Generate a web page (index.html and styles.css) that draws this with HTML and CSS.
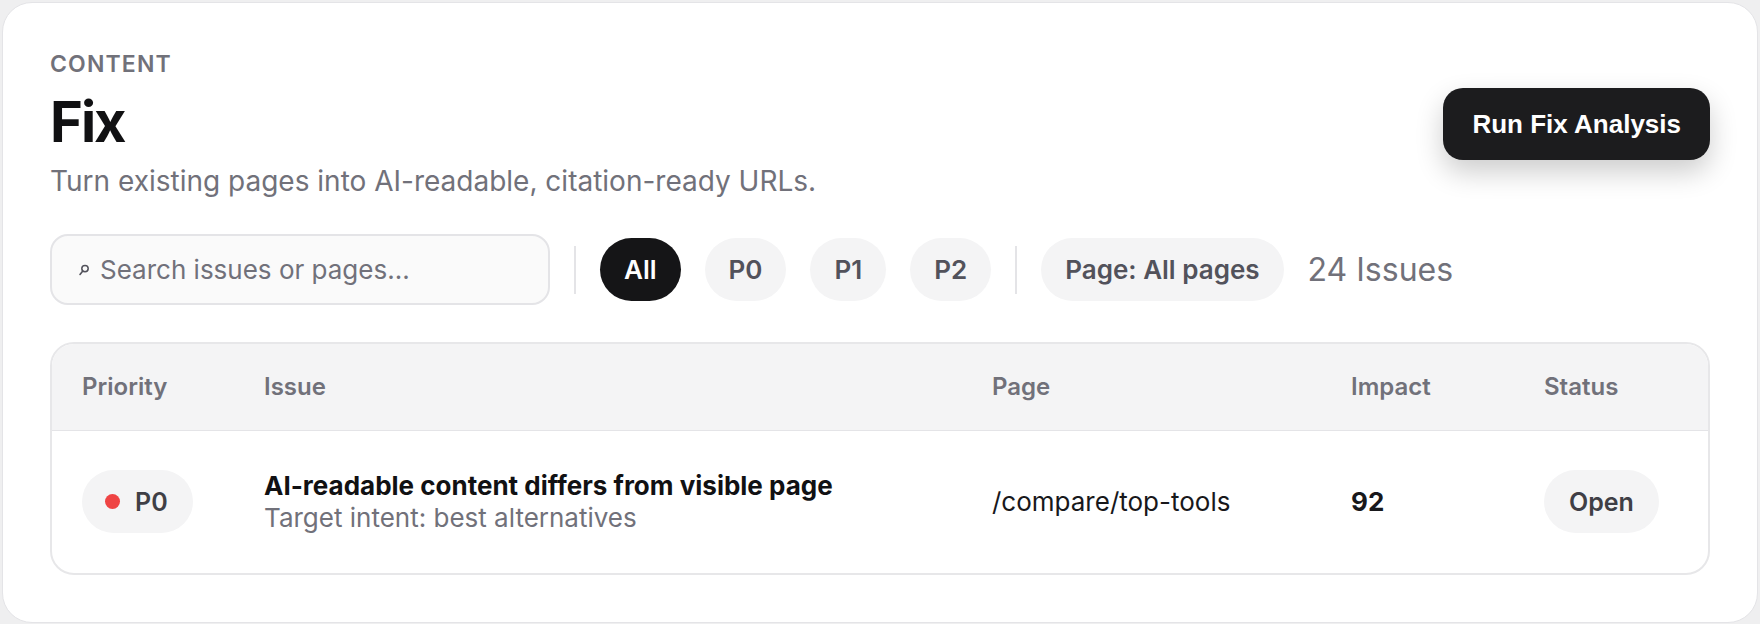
FILE: index.html
```html
<!DOCTYPE html>
<html lang="en">
  <head>
    <meta charset="UTF-8" />
    <meta name="viewport" content="width=device-width, initial-scale=1.0" />
    <title>Fix</title>
    <link rel="stylesheet" href="styles.css">
  </head>
  <body>
    <div class="panel">
      <div class="panel-head">
        <div class="titles">
          <p class="eyebrow">Content</p>
          <h1>Fix</h1>
          <p class="lead">Turn existing pages into AI-readable, citation-ready URLs.</p>
        </div>
        <button class="run-btn">Run Fix Analysis</button>
      </div>

      <div class="toolbar">
        <label class="search">
          <svg class="search-icon" width="12" height="12" viewBox="0 0 12 12">
            <circle cx="7" cy="4.6" r="3.2" fill="none" stroke="#52525b" stroke-width="1.5" />
            <line x1="4.8" y1="7" x2="2" y2="10.4" stroke="#52525b" stroke-width="1.6" stroke-linecap="round" />
          </svg>
          <input type="search" placeholder="Search issues or pages..." />
        </label>
        <span class="divider"></span>
        <button class="chip active">All</button>
        <button class="chip">P0</button>
        <button class="chip">P1</button>
        <button class="chip">P2</button>
        <span class="divider"></span>
        <button class="chip">Page: All pages</button>
        <span class="count">24 Issues</span>
      </div>

      <div class="issues">
        <table>
          <colgroup>
            <col class="col-priority" />
            <col class="col-issue" />
            <col class="col-page" />
            <col class="col-impact" />
            <col />
          </colgroup>
          <tr>
            <th>Priority</th>
            <th>Issue</th>
            <th>Page</th>
            <th>Impact</th>
            <th>Status</th>
          </tr>
          <tr>
            <td><span class="badge"><span class="dot"></span>P0</span></td>
            <td>
              <p class="issue-title">AI-readable content differs from visible page</p>
              <p class="issue-sub">Target intent: best alternatives</p>
            </td>
            <td class="page-url">/compare/top-tools</td>
            <td class="impact">92</td>
            <td><span class="badge status">Open</span></td>
          </tr>
        </table>
      </div>
    </div>
  </body>
</html>
```

FILE: styles.css
```css
* {
  font-family: "Inter", "Noto Sans", sans-serif;
  margin: 0;
  padding: 0;
  box-sizing: border-box;
}

body {
  background-color: #efeff0;
  padding: 2px;
}

.panel {
  background: #fff;
  border: 1px solid #e4e4e7;
  border-radius: 30px;
  padding: 47px 47px 47px;
}

/* Header */
.panel-head {
  display: flex;
  justify-content: space-between;
  align-items: center;
}

.eyebrow {
  color: #71717a;
  font-size: 23px;
  line-height: 28px;
  font-weight: 600;
  letter-spacing: 0.05em;
  text-transform: uppercase;
}

h1 {
  color: #111113;
  font-size: 56px;
  line-height: 68px;
  font-weight: 700;
  letter-spacing: -0.035em;
  margin-top: 10px;
}

.lead {
  color: #71717a;
  font-size: 28px;
  line-height: 34px;
  margin-top: 8px;
}

.run-btn {
  font-family: "Liberation Sans", Arial, sans-serif;
  font-size: 26px;
  font-weight: 700;
  color: #fff;
  background: #1c1c1e;
  border: none;
  border-radius: 20px;
  height: 72px;
  padding: 0 29px;
  box-shadow: 0 12px 28px rgba(0, 0, 0, 0.2);
  cursor: pointer;
}

/* Filters */
.toolbar {
  display: flex;
  align-items: center;
  gap: 24px;
  margin-top: 36px;
}

.search {
  display: flex;
  align-items: center;
  gap: 10px;
  width: 500px;
  height: 71px;
  padding: 0 26px;
  border: 2px solid #e4e4e7;
  border-radius: 18px;
  background: #fafafa;
}

.search-icon {
  flex-shrink: 0;
}

.search input {
  border: none;
  outline: none;
  background: transparent;
  font-size: 26px;
  color: #27272a;
  width: 100%;
}

.search input::placeholder {
  color: #71717a;
}

.divider {
  width: 2px;
  height: 48px;
  background: #e4e4e7;
}

.chip {
  height: 63px;
  padding: 0 24px;
  border: none;
  border-radius: 999px;
  background: #f4f4f5;
  color: #52525b;
  font-size: 26px;
  font-weight: 600;
  cursor: pointer;
}

.chip.active {
  background: #151517;
  color: #fff;
}

.count {
  color: #71717a;
  font-size: 32px;
}

/* Issues table */
.issues {
  margin-top: 37px;
  border: 2px solid #e7e7e9;
  border-radius: 24px;
  overflow: hidden;
}

table {
  width: 100%;
  table-layout: fixed;
  border-collapse: collapse;
}

.col-priority {
  width: 182px;
}

.col-issue {
  width: 728px;
}

.col-page {
  width: 359px;
}

.col-impact {
  width: 193px;
}

th {
  height: 86px;
  padding: 0 30px;
  text-align: left;
  background: #f4f4f5;
  border-bottom: 1px solid #e4e4e7;
  color: #71717a;
  font-size: 24px;
  font-weight: 600;
}

td {
  height: 143px;
  padding: 0 30px;
  color: #18181b;
  font-size: 26px;
}

.badge {
  display: inline-flex;
  align-items: center;
  height: 63px;
  padding: 0 25px 0 23px;
  border-radius: 999px;
  background: #f4f4f5;
  color: #3f3f46;
  font-size: 25px;
  font-weight: 600;
}

.dot {
  width: 15px;
  height: 15px;
  border-radius: 50%;
  background: #ef4444;
  margin-right: 15px;
}

.badge.status {
  padding: 0 25px;
}

.issue-title {
  font-size: 26px;
  line-height: 32px;
  font-weight: 700;
  color: #111113;
}

.issue-sub {
  font-size: 26px;
  line-height: 32px;
  color: #71717a;
}

.impact {
  font-weight: 700;
}
```
